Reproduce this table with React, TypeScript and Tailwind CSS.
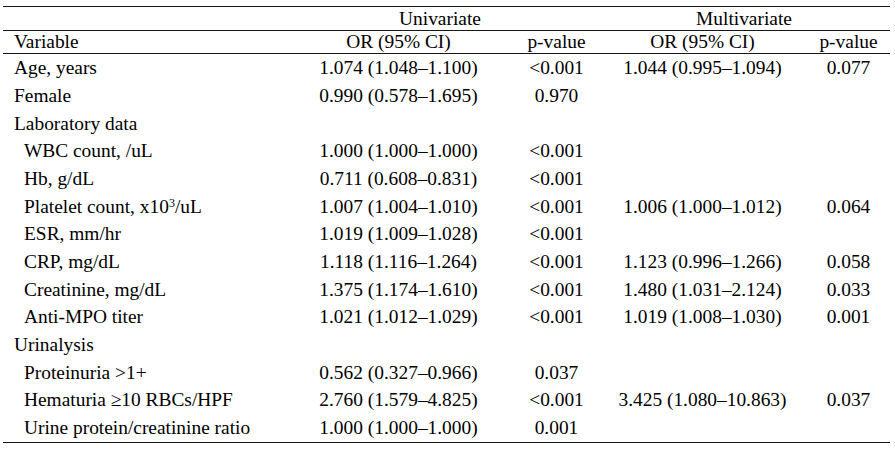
const rows: { label: React.ReactNode; indent?: boolean; uOr?: string; uP?: string; mOr?: string; mP?: string }[] = [
  { label: 'Age, years', uOr: '1.074 (1.048–1.100)', uP: '<0.001', mOr: '1.044 (0.995–1.094)', mP: '0.077' },
  { label: 'Female', uOr: '0.990 (0.578–1.695)', uP: '0.970' },
  { label: 'Laboratory data' },
  { label: 'WBC count, /uL', indent: true, uOr: '1.000 (1.000–1.000)', uP: '<0.001' },
  { label: 'Hb, g/dL', indent: true, uOr: '0.711 (0.608–0.831)', uP: '<0.001' },
  {
    label: (
      <>
        Platelet count, x10<sup className="text-[12px]">3</sup>/uL
      </>
    ),
    indent: true,
    uOr: '1.007 (1.004–1.010)',
    uP: '<0.001',
    mOr: '1.006 (1.000–1.012)',
    mP: '0.064',
  },
  { label: 'ESR, mm/hr', indent: true, uOr: '1.019 (1.009–1.028)', uP: '<0.001' },
  { label: 'CRP, mg/dL', indent: true, uOr: '1.118 (1.116–1.264)', uP: '<0.001', mOr: '1.123 (0.996–1.266)', mP: '0.058' },
  { label: 'Creatinine, mg/dL', indent: true, uOr: '1.375 (1.174–1.610)', uP: '<0.001', mOr: '1.480 (1.031–2.124)', mP: '0.033' },
  { label: 'Anti-MPO titer', indent: true, uOr: '1.021 (1.012–1.029)', uP: '<0.001', mOr: '1.019 (1.008–1.030)', mP: '0.001' },
  { label: 'Urinalysis' },
  { label: 'Proteinuria >1+', indent: true, uOr: '0.562 (0.327–0.966)', uP: '0.037' },
  { label: 'Hematuria ≥10 RBCs/HPF', indent: true, uOr: '2.760 (1.579–4.825)', uP: '<0.001', mOr: '3.425 (1.080–10.863)', mP: '0.037' },
  { label: 'Urine protein/creatinine ratio', indent: true, uOr: '1.000 (1.000–1.000)', uP: '0.001' },
]

// column widths: Variable | OR | p | OR | p
const cols = 'grid grid-cols-[279px_233px_83px_209px_83px]'

function Rule() {
  return <div className="h-px shrink-0 w-[887px] bg-neutral-900 shadow-[inset_0_0_0_1px_#171717]" />
}

export default function App() {
  return (
    <div className="flex flex-col w-[895px] h-[450px] bg-white pt-[6px] pl-[3px] text-[19.4px] text-black font-['Liberation_Serif','Times_New_Roman',serif]">
      <Rule />
      {/* group header */}
      <div className="grid grid-cols-[279px_316px_292px] h-[23px] shrink-0 items-center leading-none">
        <div />
        <div className="text-center">Univariate</div>
        <div className="text-center">Multivariate</div>
      </div>
      <Rule />
      <div className={cols + ' h-[22px] shrink-0 items-center leading-none'}>
        <div className="pl-[11px]">Variable</div>
        <div className="text-center">OR (95% CI)</div>
        <div className="text-center">p-value</div>
        <div className="text-center">OR (95% CI)</div>
        <div className="text-center">p-value</div>
      </div>
      <Rule />
      {rows.map((r, i) => (
        <div key={i} className={cols + ' h-[27.7px] shrink-0 items-center leading-none whitespace-nowrap'}>
          <div className={r.indent ? 'pl-[21px]' : 'pl-[11px]'}>{r.label}</div>
          <div className="text-center">{r.uOr}</div>
          <div className="text-center">{r.uP}</div>
          <div className="text-center">{r.mOr}</div>
          <div className="text-center">{r.mP}</div>
        </div>
      ))}
      <Rule />
    </div>
  )
}
